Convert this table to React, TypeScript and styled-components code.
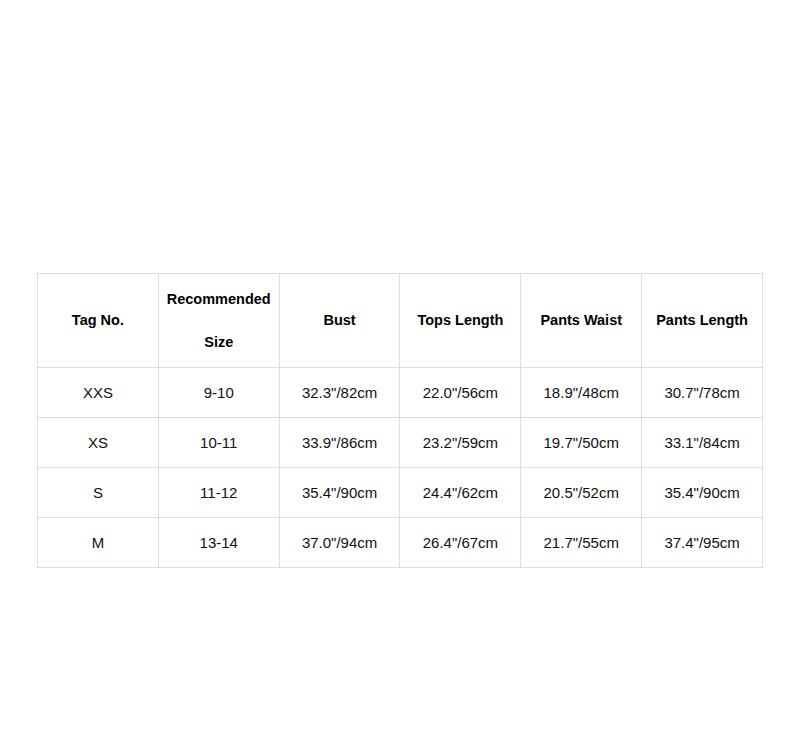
import React from "react";
import styled, { createGlobalStyle } from "styled-components";

const GlobalStyle = createGlobalStyle`
  body {
    margin: 0;
    background: #ffffff;
    font-family: "Liberation Sans", Arial, sans-serif;
  }
`;

const Page = styled.div`
  padding: 273px 37px 0;
`;

const Table = styled.table`
  width: 726px;
  table-layout: fixed;
  border-collapse: collapse;
  color: #000;
`;

const HeadCell = styled.th`
  border: 1px solid #dedede;
  height: 93px;
  padding: 0 4px;
  font-size: 14.5px;
  font-weight: 700;
  line-height: 43px;
  text-align: center;
  vertical-align: middle;
`;

const Cell = styled.td`
  border: 1px solid #dedede;
  height: 49px;
  padding: 0 4px;
  font-size: 15px;
  text-align: center;
  vertical-align: middle;
  color: #111;
`;

const headers = [
  "Tag No.",
  "Recommended Size",
  "Bust",
  "Tops Length",
  "Pants Waist",
  "Pants Length",
];

const rows = [
  ["XXS", "9-10", "32.3\"/82cm", "22.0\"/56cm", "18.9\"/48cm", "30.7\"/78cm"],
  ["XS", "10-11", "33.9\"/86cm", "23.2\"/59cm", "19.7\"/50cm", "33.1\"/84cm"],
  ["S", "11-12", "35.4\"/90cm", "24.4\"/62cm", "20.5\"/52cm", "35.4\"/90cm"],
  ["M", "13-14", "37.0\"/94cm", "26.4\"/67cm", "21.7\"/55cm", "37.4\"/95cm"],
];

const App: React.FC = () => (
  <Page>
    <GlobalStyle />
    <Table>
      <thead>
        <tr>
          {headers.map(h => (
            <HeadCell key={h}>{h}</HeadCell>
          ))}
        </tr>
      </thead>
      <tbody>
        {rows.map(row => (
          <tr key={row[0]}>
            {row.map((value, i) => (
              <Cell key={i}>{value}</Cell>
            ))}
          </tr>
        ))}
      </tbody>
    </Table>
  </Page>
);

export default App;
